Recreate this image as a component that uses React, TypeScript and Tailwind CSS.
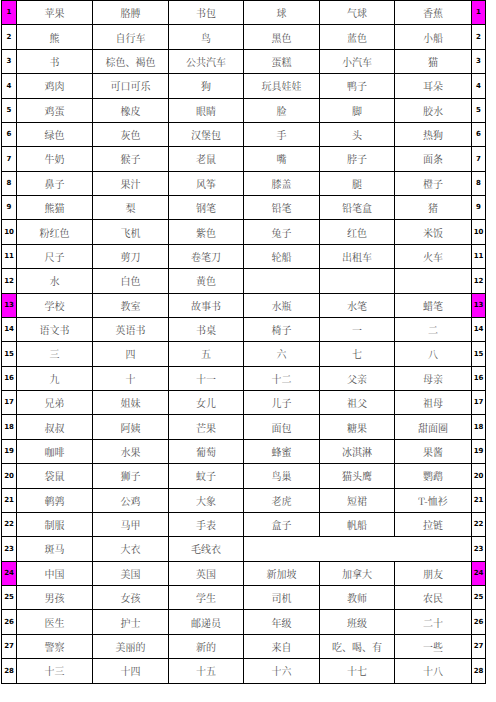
const rows: string[][] = [
  ["苹果", "胳膊", "书包", "球", "气球", "香蕉"],
  ["熊", "自行车", "鸟", "黑色", "蓝色", "小船"],
  ["书", "棕色、褐色", "公共汽车", "蛋糕", "小汽车", "猫"],
  ["鸡肉", "可口可乐", "狗", "玩具娃娃", "鸭子", "耳朵"],
  ["鸡蛋", "橡皮", "眼睛", "脸", "脚", "胶水"],
  ["绿色", "灰色", "汉堡包", "手", "头", "热狗"],
  ["牛奶", "猴子", "老鼠", "嘴", "脖子", "面条"],
  ["鼻子", "果汁", "风筝", "膝盖", "腿", "橙子"],
  ["熊猫", "梨", "钢笔", "铅笔", "铅笔盒", "猪"],
  ["粉红色", "飞机", "紫色", "兔子", "红色", "米饭"],
  ["尺子", "剪刀", "卷笔刀", "轮船", "出租车", "火车"],
  ["水", "白色", "黄色", "", "", ""],
  ["学校", "教室", "故事书", "水瓶", "水笔", "蜡笔"],
  ["语文书", "英语书", "书桌", "椅子", "一", "二"],
  ["三", "四", "五", "六", "七", "八"],
  ["九", "十", "十一", "十二", "父亲", "母亲"],
  ["兄弟", "姐妹", "女儿", "儿子", "祖父", "祖母"],
  ["叔叔", "阿姨", "芒果", "面包", "糖果", "甜面圈"],
  ["咖啡", "水果", "葡萄", "蜂蜜", "冰淇淋", "果酱"],
  ["袋鼠", "狮子", "蚊子", "鸟巢", "猫头鹰", "鹦鹉"],
  ["鹌鹑", "公鸡", "大象", "老虎", "短裙", "T-恤衫"],
  ["制服", "马甲", "手表", "盒子", "帆船", "拉链"],
  ["斑马", "大衣", "毛线衣"],
  ["中国", "美国", "英国", "新加坡", "加拿大", "朋友"],
  ["男孩", "女孩", "学生", "司机", "教师", "农民"],
  ["医生", "护士", "邮递员", "年级", "班级", "二十"],
  ["警察", "美丽的", "新的", "来自", "吃、喝、有", "一些"],
  ["十三", "十四", "十五", "十六", "十七", "十八"],
];

const highlighted = [1, 13, 24];

const cell = "border-r border-b border-black flex items-center justify-center";
const word = `${cell} text-[10px] text-[#555]`;

function NumCell({ n }: { n: number }) {
  const hot = highlighted.includes(n);
  return (
    <div
      className={`${cell} text-[7px] font-bold text-black ${hot ? "bg-[#ff00ff]" : ""}`}
      style={{ fontFamily: '"DejaVu Sans", sans-serif' }}
    >
      {n}
    </div>
  );
}

export default function App() {
  return (
    <div className="w-[496px] h-[702px] bg-white pl-px">
      <div
        className="grid grid-cols-[15px_76px_76px_75px_76px_75px_77px_14px] grid-rows-[repeat(28,24.39px)] w-[485px] border-l border-t border-black"
        style={{ fontFamily: '"Noto Serif CJK SC", "Noto Sans CJK SC", serif' }}
      >
        {rows.map((r, i) => (
          <div key={i} className="contents">
            <NumCell n={i + 1} />
            {r.map((w, j) => (
              <div key={j} className={word}>{w}</div>
            ))}
            {r.length === 3 && <div className={`${word} col-span-3`} />}
            <NumCell n={i + 1} />
          </div>
        ))}
      </div>
    </div>
  );
}
